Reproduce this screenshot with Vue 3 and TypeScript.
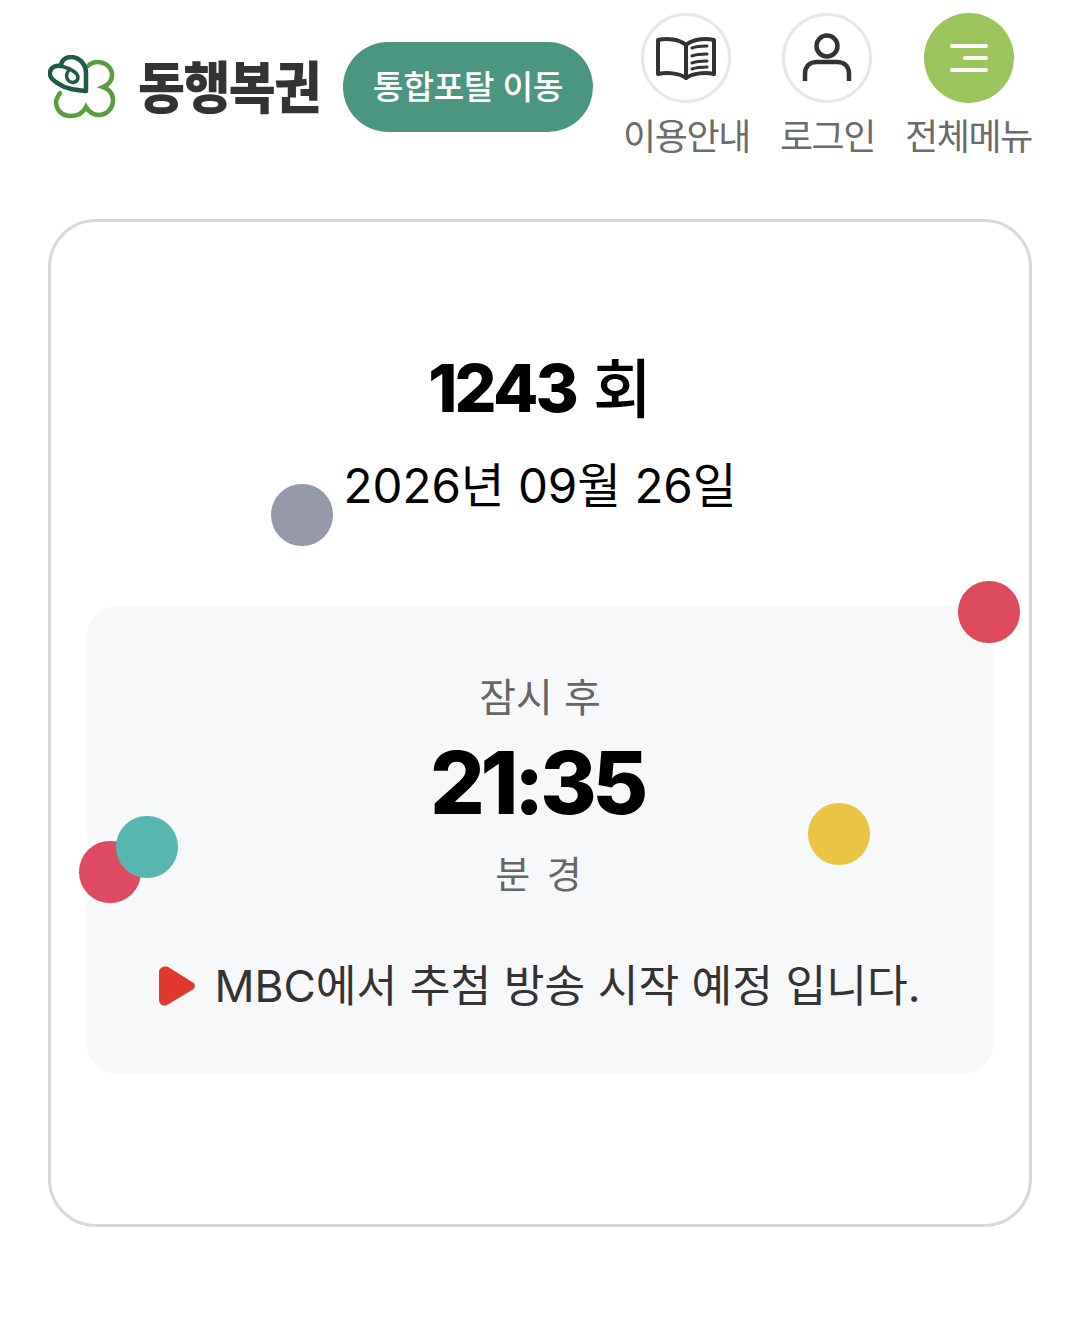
<script setup lang="ts">
interface Dot {
  color: string
  x: number
  y: number
}

// 추첨 화면 위로 떨어지는 색종이
const dots: Dot[] = [
  { color: '#9498a9', x: 271, y: 484 },
  { color: '#dc4a5c', x: 958, y: 581 },
  { color: '#de4a62', x: 79, y: 841 },
  { color: '#57b7b0', x: 116, y: 816 },
  { color: '#ecc444', x: 808, y: 803 }
]
</script>

<template>
  <div class="page">
    <header class="top">
      <div class="brand">
        <svg class="logo" width="68" height="66" viewBox="0 0 68 66" fill="none">
          <path d="M40 11 C43 8 46 7 49 7 C57 7 64 12 64 20 C64 26 60 30 55 32 C61 34 65 39 65 45 C65 54 58 60 51 60 C45 60 41 57 38 52 C35 58 29 61 23 61 C14 61 8 55 8 47 C8 44 10 41 12 38" stroke="#5a9c40" stroke-width="4.5" stroke-linecap="round" />
          <path d="M38 36 C28 35 18 34 11 29 C4 25 1 21 2 17 C3 12 8 10 13 11 C13 5 18 2 23 2 C30 2 38 8 38 18 Z" stroke="#1f5a48" stroke-width="4.5" stroke-linejoin="round" />
          <path d="M13 11 C20 13 29 16 30 22 C30 28 23 29 20 25 C17 21 19 16 23 13" stroke="#1f5a48" stroke-width="3.5" />
        </svg>
        <span class="brand-name">동행복권</span>
      </div>
      <button class="portal">통합포탈 이동</button>
      <nav class="menu">
        <div class="menu-item">
          <span class="circle">
            <svg width="62" height="44" viewBox="0 0 62 44" fill="none" stroke="#333" stroke-width="4" stroke-linejoin="round" stroke-linecap="round">
              <path d="M31 9 C24 3 12 2 3 4 V38 C12 36 24 37 31 42 C38 37 50 36 59 38 V4 C50 2 38 3 31 9 Z M31 9 V42" />
              <path d="M37 12 C42 10 47 10 52 10 M37 20 C42 18 47 18 52 18 M37 27 C42 25 47 25 52 25 M37 33 C42 31 47 31 52 31" stroke-width="3" />
            </svg>
          </span>
          <span class="menu-label">이용안내</span>
        </div>
        <div class="menu-item">
          <span class="circle">
            <svg width="50" height="50" viewBox="0 0 50 50" fill="none" stroke="#333" stroke-width="4.5">
              <circle cx="25" cy="13" r="10.5" />
              <path d="M3 48 V41 C3 33 8 29 15 29 H35 C42 29 47 33 47 41 V48" />
            </svg>
          </span>
          <span class="menu-label">로그인</span>
        </div>
        <div class="menu-item">
          <span class="circle green">
            <span class="bar"></span>
            <span class="bar short"></span>
            <span class="bar"></span>
          </span>
          <span class="menu-label">전체메뉴</span>
        </div>
      </nav>
    </header>

    <main class="card">
      <h1 class="round">1243 <span class="unit">회</span></h1>
      <p class="date">2026년 09월 26일</p>
      <section class="panel">
        <p class="soon">잠시 후</p>
        <p class="time">21:35</p>
        <p class="soon after">분 경</p>
        <p class="notice">
          <svg width="36" height="40" viewBox="0 0 36 40">
            <path d="M7 0.5 C3 0 0 3 0 6 V34 C0 38 4 41 8 39 L33 24 C37 22 37 18 33 16 L10 1.5 C9 1 8 0.6 7 0.5 Z" fill="#e0392b" />
          </svg>
          <span>MBC에서 추첨 방송 시작 예정 입니다.</span>
        </p>
      </section>
    </main>

    <i
      v-for="dot in dots"
      :key="dot.x"
      class="dot"
      :style="{ background: dot.color, left: dot.x + 'px', top: dot.y + 'px' }"
    ></i>
  </div>
</template>

<style>
body {
  background: #fff;
}
</style>

<style scoped>
.page {
  position: relative;
  width: 1080px;
  height: 1323px;
  overflow: hidden;
  padding: 13px 48px 0;
  box-sizing: border-box;
  font-family: Inter, "Noto Sans CJK KR", sans-serif;
}

.top {
  display: flex;
  align-items: flex-start;
  height: 206px;
}

.brand {
  display: flex;
  align-items: center;
  margin-top: 42px;
  width: 295px;
}

.logo {
  flex: none;
  margin-right: 22px;
}

.brand-name {
  display: inline-block;
  font-size: 51px;
  line-height: 66px;
  font-weight: 900;
  color: #333;
  letter-spacing: -1.5px;
  white-space: nowrap;
  transform: scaleY(1.1);
}

.portal {
  flex: none;
  width: 250px;
  height: 90px;
  margin-top: 29px;
  padding-bottom: 6px;
  border: none;
  border-radius: 45px;
  background: #4a9680;
  color: #fff;
  font: 500 33.5px Inter, "Noto Sans CJK KR", sans-serif;
  letter-spacing: -0.5px;
}

.menu {
  display: flex;
  margin-left: 30px;
  gap: 30px;
}

.menu-item {
  display: flex;
  flex-direction: column;
  align-items: center;
  gap: 10px;
}

.circle {
  display: flex;
  flex-direction: column;
  align-items: center;
  justify-content: center;
  box-sizing: border-box;
  width: 90px;
  height: 90px;
  border: 3px solid #e6e7ec;
  border-radius: 50%;
}

.circle.green {
  gap: 8px;
  border: none;
  background: #9bc55c;
}

.bar {
  display: block;
  width: 38px;
  height: 4px;
  border-radius: 2px;
  background: #fff;
}

.bar.short {
  width: 25px;
  margin-left: 13px;
}

.menu-label {
  font-size: 36px;
  line-height: 48px;
  color: #6b6b6b;
  letter-spacing: -1.4px;
  white-space: nowrap;
}

.card {
  box-sizing: border-box;
  height: 1008px;
  padding: 0 36px;
  border: 3px solid #d8d8d8;
  border-radius: 48px;
  text-align: center;
}

.round {
  height: 100px;
  margin: 116px 0 0;
  font-size: 66px;
  line-height: 100px;
  font-weight: 800;
  letter-spacing: -2.75px;
  color: #000;
}

.unit {
  margin-left: 5px;
  font-size: 64px;
  font-weight: 500;
  letter-spacing: 0;
}

.date {
  margin: 2px 0 0;
  font-size: 47.5px;
  line-height: 92px;
  color: #000;
}

.panel {
  height: 468px;
  margin-top: 74px;
  padding-top: 69px;
  box-sizing: border-box;
  border-radius: 30px;
  background: #f7f8fa;
}

.soon {
  margin: 0;
  font-size: 40px;
  line-height: 46px;
  font-weight: 400;
  color: #666;
}

.soon.after {
  margin-top: 6px;
  font-size: 38px;
  letter-spacing: 3px;
}

.time {
  margin: 0;
  padding-right: 6px;
  font-size: 86px;
  line-height: 124px;
  font-weight: 800;
  letter-spacing: -4.3px;
  color: #000;
}

.notice {
  display: flex;
  align-items: center;
  justify-content: center;
  gap: 19px;
  margin: 59px 0 0;
  font-size: 44.3px;
  line-height: 60px;
  color: #333;
  white-space: nowrap;
}

.dot {
  position: absolute;
  width: 61.5px;
  height: 61.5px;
  border-radius: 50%;
}
</style>
